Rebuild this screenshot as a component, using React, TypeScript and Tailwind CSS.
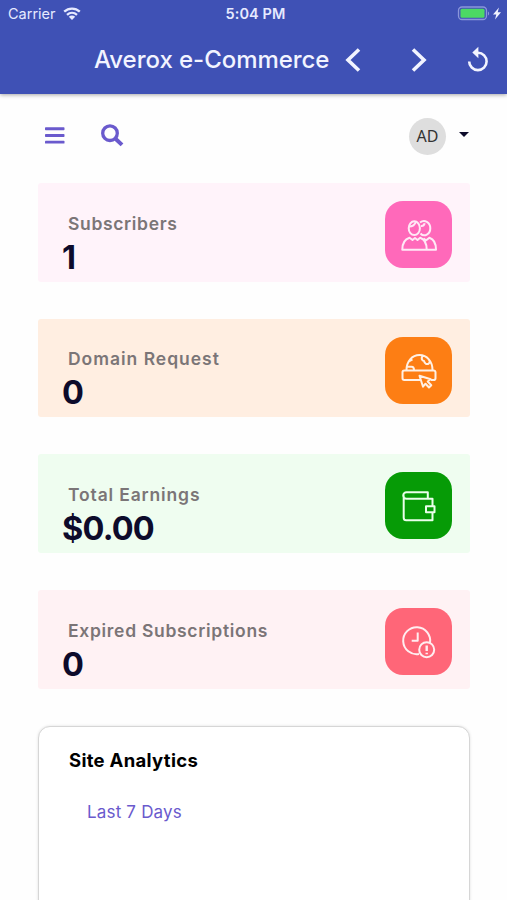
import { ReactNode } from "react";
import { clsx } from "clsx";

interface Stat {
  label: string;
  value: string;
  cardStyle: string;
  iconStyle: string;
  labelStyle: string;
  valueStyle: string;
  icon: ReactNode;
}

const statData: Stat[] = [
  {
    label: "Subscribers",
    value: "1",
    cardStyle: "bg-[#fff3fa]",
    iconStyle: "bg-[#ff69ba] text-[#ffe9f6]",
    labelStyle: "tracking-[0.650px]",
    valueStyle: "",
    icon: (
      <>
        <ellipse cx="29.300" cy="27.200" rx="5.600" ry="6.900" />
        <path d="M24 25.500c3.500 0 6-2 6.800-4.800M35 21.500c4.500-3.500 10.300-.3 10.300 5.700s-6 9.300-9.800 5.300M36 25c2 .2 3.200-.8 3.700-2.800" />
        <path d="M17.300 48.700H41.700c0-6-2-10.500-6.500-12L32.500 39 30 37l-2.500 2-3-2.300c-5 1.500-7.200 6-7.200 12zM38.500 37.500l2.700 1.800 3.200-2.600c4.600 1.500 6.600 6 6.600 12h-9" />
      </>
    ),
  },
  {
    label: "Domain Request",
    value: "0",
    cardStyle: "bg-[#ffeee1]",
    iconStyle: "bg-[#fd7e14] text-[#fff0e4]",
    labelStyle: "tracking-[0.980px]",
    valueStyle: "tracking-[-1px]",
    icon: (
      <>
        <path d="M21.500 33c0-8.500 5.500-15 13-15s13 6.500 13 15M22 29.700h4.500c1.500 0 2.500 1.300 2.500 3.300M37.500 18.700c-1.500 3-.5 5 1.500 5.300.5 2.500 3 4.200 5 2.200 1.300-1.200.7-2.800-.5-4M24 24.500l3.500-2" />
        <path d="M35.500 43H19.300a1.800 1.800 0 0 1-1.800-1.800v-5.900a1.800 1.800 0 0 1 1.800-1.800h29.400a1.800 1.800 0 0 1 1.800 1.800v5.900a1.800 1.800 0 0 1-1.800 1.800H46" />
        <path d="M34.500 38.700l3.500 11 2.500-3 3.500 3.800 2.300-2.300-3.600-3.700 3-2.300z" />
      </>
    ),
  },
  {
    label: "Total Earnings",
    value: "$0.00",
    cardStyle: "bg-[#effdf0]",
    iconStyle: "bg-[#069b06] text-[#eaffea]",
    labelStyle: "tracking-[0.850px]",
    valueStyle: "tracking-[-0.800px]",
    icon: (
      <>
        <path d="M47.500 34v-7.200h-26a3.200 3.200 0 0 1 0-6.500h21.300v6.500M18.700 23.500v22.200a2.500 2.500 0 0 0 2.500 2.500h26.300v-8" />
        <path d="M41 34.200h8.500v6H41z" />
      </>
    ),
  },
  {
    label: "Expired Subscriptions",
    value: "0",
    cardStyle: "bg-[#fff2f4]",
    iconStyle: "bg-[#ff6678] text-[#ffeef0]",
    labelStyle: "tracking-[0.700px]",
    valueStyle: "",
    icon: (
      <>
        <path d="M34 46a13.500 13.500 0 1 1 11-11" />
        <path d="M32.700 24.500v8.300h-6" />
        <circle cx="41.700" cy="41.700" r="7.500" />
        <path d="M41.700 37.500v5.500M41.700 44.700v1.500" strokeWidth="2.400" />
      </>
    ),
  },
];

function StatusBar() {
  return (
    <div className="grid h-7 grid-cols-3 items-center pl-2 pr-1 text-sm text-[#e6eaff]">
      <div className="flex items-center gap-[7px]">
        <span className="text-[14.500px]">Carrier</span>
        <svg className="h-[13px] w-[18px]" viewBox="0 0 18 13" fill="none">
          <path
            d="M1.200 4.700C5.700.5 12.300.5 16.800 4.700M4 7.800c3-2.700 7-2.700 10 0"
            stroke="currentColor"
            strokeWidth="2.300"
          />
          <path d="M5.800 9.700c1.900-1.600 4.500-1.600 6.400 0L9 12.900z" fill="currentColor" />
        </svg>
      </div>
      <span className="text-center text-[14.500px] font-semibold tracking-[0.1px]">
        5:04 PM
      </span>
      <svg
        className="h-4 w-[46px] justify-self-end"
        viewBox="0 0 46 16"
        fill="none"
      >
        <rect x="1.500" y="1" width="28" height="12.500" rx="3.500" stroke="#8b96da" strokeWidth="1.300" />
        <rect x="3.500" y="2.800" width="24" height="9" rx="1.500" fill="#4cd964" />
        <path d="M31 5.500c1.500.5 1.500 3.500 0 4z" fill="#8b96da" />
        <path d="M42 1.500L36 8.500h3.300L38 13.500l6-7.200h-3.300z" fill="#f1f3ff" />
      </svg>
    </div>
  );
}

function Header() {
  return (
    <header className="relative h-[94px] bg-[#3f51b5] shadow-[0_1px_4px_rgba(0,0,0,0.35)]">
      <StatusBar />
      <div className="flex h-16 items-center pl-[94px] text-[#f2f4ff]">
        <h1 className="w-[251px] whitespace-nowrap text-[24px] font-medium tracking-[-0.050px]">
          Averox e-Commerce
        </h1>
        <svg className="h-6 w-4" viewBox="0 0 16 24" fill="none" stroke="currentColor" strokeWidth="3.600">
          <path d="M14 1.500L3 12l11 10.500" />
        </svg>
        <svg className="ml-[50px] h-6 w-4" viewBox="0 0 16 24" fill="none" stroke="currentColor" strokeWidth="3.600">
          <path d="M2 1.500L13 12 2 22.500" />
        </svg>
        <svg className="mb-[2px] ml-[39px] h-[26px] w-6" viewBox="0 0 24 26" fill="none">
          <path
            d="M12 6.700a8.700 8.700 0 1 1-8.800 8.700"
            stroke="currentColor"
            strokeWidth="2.600"
          />
          <path d="M12.400.7v11.600L6.300 6.500z" fill="currentColor" />
        </svg>
      </div>
    </header>
  );
}

function Toolbar() {
  return (
    <div className="flex h-[89px] items-center pb-[5px] pl-[43.500px] pr-[38px] text-[#6a5acd]">
      <svg className="h-5 w-[21px]" viewBox="0 0 21 20" fill="currentColor">
        <rect x="1" y="1.300" width="19.500" height="2.900" rx=".7" />
        <rect x="1" y="8" width="19.500" height="2.900" rx=".7" />
        <rect x="1" y="14.700" width="19.500" height="2.900" rx=".7" />
      </svg>
      <svg className="mb-[2px] ml-[35px] h-6 w-6" viewBox="0 0 24 24" fill="none" stroke="currentColor">
        <circle cx="10" cy="10.200" r="7.300" strokeWidth="3.300" />
        <path d="M15.500 15.700l6.500 6.200" strokeWidth="4" />
      </svg>
      <div className="ml-auto flex items-center">
        <div className="flex size-[37px] items-center justify-center rounded-full bg-[#dedede] font-['Noto_Sans',sans-serif] text-base text-[#333]">
          AD
        </div>
        <svg className="mb-1 ml-[13px] h-[5px] w-[10px]" viewBox="0 0 10 5">
          <path d="M0 0h10L5 5z" fill="#0d0b2b" />
        </svg>
      </div>
    </div>
  );
}

function StatCard({ stat }: { stat: Stat }) {
  return (
    <div
      className={clsx(
        "flex h-[98.500px] justify-between rounded-[3px] pl-6 pr-[18px] pt-[18px]",
        stat.cardStyle
      )}
    >
      <div className="pt-[10.500px]">
        <h2
          className={clsx(
            "pl-[6px] text-[17.500px] font-semibold leading-6 text-[#7b7577]",
            stat.labelStyle
          )}
        >
          {stat.label}
        </h2>
        <p
          className={clsx(
            "pt-[2px] text-[32.500px] font-bold leading-10 text-[#0d0b2b]",
            stat.valueStyle
          )}
        >
          {stat.value}
        </p>
      </div>
      <div className={clsx("size-[67px] rounded-[18px]", stat.iconStyle)}>
        <svg
          className="size-full"
          viewBox="0 0 67 67"
          fill="none"
          stroke="currentColor"
          strokeWidth="2"
          strokeLinejoin="round"
        >
          {stat.icon}
        </svg>
      </div>
    </div>
  );
}

function App() {
  return (
    <div className="h-[900px] w-[507px] overflow-hidden bg-[#fefefe] font-['Inter',sans-serif]">
      <Header />
      <Toolbar />
      <main className="flex flex-col gap-[37.200px] pl-[38px] pr-[37px]">
        {statData.map((stat) => (
          <StatCard stat={stat} key={stat.label} />
        ))}
        <section className="h-60 rounded-xl border-[1.500px] border-[#d6d6d6] bg-white pl-[30px] pt-[19px] shadow-[0_0_3px_rgba(0,0,0,0.12)]">
          <h2 className="text-[18.500px] font-bold leading-7 tracking-[0.300px] text-black">
            Site Analytics
          </h2>
          <p className="pl-[18px] pt-6 text-[17px] leading-7 tracking-[0.180px] text-[#6a5acd]">
            Last 7 Days
          </p>
        </section>
      </main>
    </div>
  );
}

export default App;
